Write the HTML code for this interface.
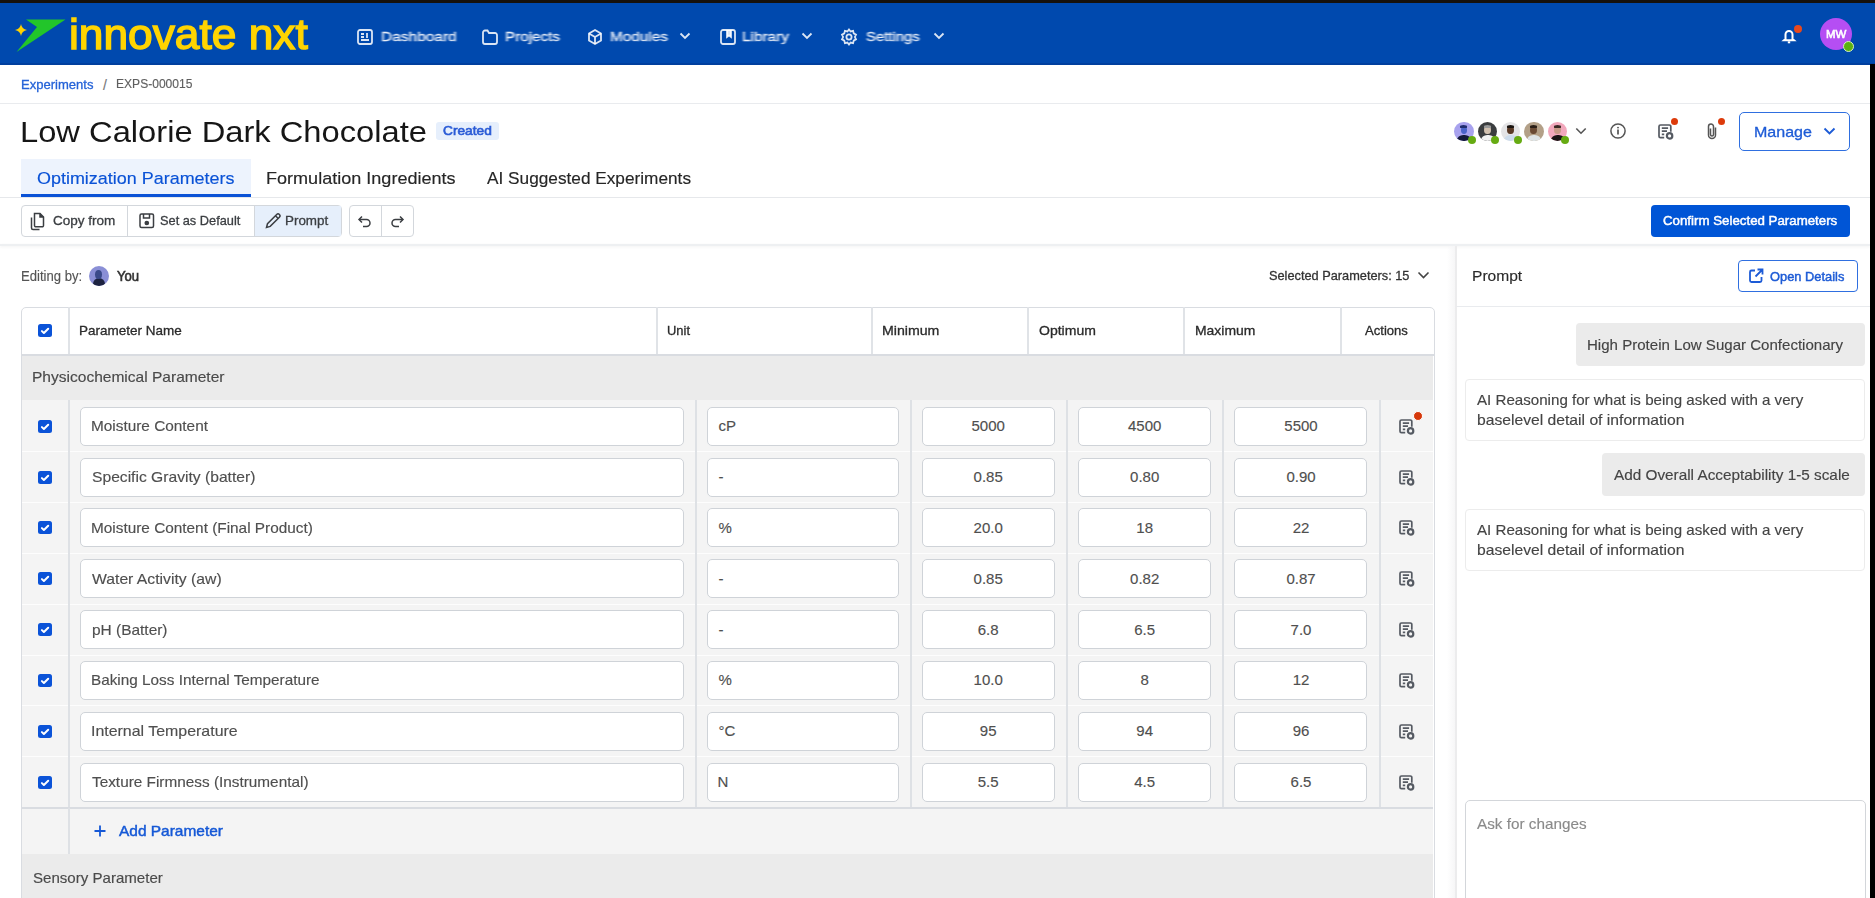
<!DOCTYPE html>
<html><head><meta charset="utf-8"><title>innovate nxt</title>
<style>
html,body{margin:0;padding:0;}
body{width:1875px;height:898px;overflow:hidden;position:relative;background:#fff;font-family:"Liberation Sans", sans-serif;}
.a{position:absolute;}
.t{position:absolute;white-space:nowrap;line-height:1;transform-origin:0 0;}
.t.c .in{display:inline-block;transform-origin:50% 0;}
.t.c{transform:translateX(-50%);}
.cb{width:13.8px;height:13.8px;border-radius:2.5px;background:#0b53d8;}

.inp{background:#fff;border:1px solid #cfd3d8;border-radius:5px;box-sizing:border-box;}
</style></head><body>
<div class="a" style="left:0px;top:0px;width:1875px;height:3px;background:#16110c;"></div>
<div class="a" style="left:0px;top:3px;width:1875px;height:61px;background:#0049ae;"></div>
<div class="a" style="left:0px;top:63px;width:1875px;height:2px;background:#003f9e;"></div>
<div class="a" style="left:1870px;top:64px;width:5px;height:834px;background:#000;"></div>
<svg class="a" style="left:0;top:0" width="80" height="64" viewBox="0 0 80 64">
<path d="M26 19.5 L65.5 19.5 L16.5 52 L37 27 Z" fill="#22c52a"/>
<path d="M21 24 Q21.8 29.2 27 30 Q21.8 30.8 21 36 Q20.2 30.8 15 30 Q20.2 29.2 21 24 Z" fill="#ffd200"/>
</svg>
<div class="a" style="left:355px;top:27px;filter:blur(0.6px)"><svg style="display:block" width="20" height="20" viewBox="0 0 20 20" fill="none" stroke="rgba(255,255,255,0.86)" stroke-width="1.8">
<rect x="3" y="3" width="14" height="14" rx="2"/><path d="M6 7h3M6 10h3M6 13h8M12 6v5"/></svg></div>
<div class="a" style="left:480px;top:27px;filter:blur(0.6px)"><svg style="display:block" width="20" height="20" viewBox="0 0 20 20" fill="none" stroke="rgba(255,255,255,0.86)" stroke-width="1.8">
<path d="M3 6v9a2 2 0 0 0 2 2h10a2 2 0 0 0 2-2V8a2 2 0 0 0-2-2H9L7.5 3.5H5A2 2 0 0 0 3 5.5z"/></svg></div>
<div class="a" style="left:585px;top:27px;filter:blur(0.6px)"><svg style="display:block" width="20" height="20" viewBox="0 0 20 20" fill="none" stroke="rgba(255,255,255,0.86)" stroke-width="1.8">
<path d="M10 3l6 3.5v7L10 17l-6-3.5v-7z"/><path d="M4 6.5l6 3.5 6-3.5M10 10v7"/></svg></div>
<div class="a" style="left:718px;top:27px;filter:blur(0.6px)"><svg style="display:block" width="20" height="20" viewBox="0 0 20 20" fill="none" stroke="rgba(255,255,255,0.86)" stroke-width="1.8">
<rect x="3" y="3" width="14" height="14" rx="2"/><path d="M9 3v7l2-1.5 2 1.5V3" fill="rgba(255,255,255,0.86)"/></svg></div>
<div class="a" style="left:839px;top:27px;filter:blur(0.6px)"><svg style="display:block" width="20" height="20" viewBox="0 0 20 20" fill="none" stroke="rgba(255,255,255,0.86)" stroke-width="1.8">
<circle cx="10" cy="10" r="2.6"/><path d="M10 2.5l1.6 2 2.5-.6.6 2.5 2.3 1.2-1.1 2.4 1.1 2.4-2.3 1.2-.6 2.5-2.5-.6-1.6 2-1.6-2-2.5.6-.6-2.5-2.3-1.2 1.1-2.4-1.1-2.4 2.3-1.2.6-2.5 2.5.6z"/></svg></div>
<svg class="a" style="left:679px;top:31px;filter:blur(0.4px)" width="12" height="10" viewBox="0 0 12 10" fill="none" stroke="rgba(255,255,255,0.86)" stroke-width="1.8"><path d="M1.5 2.5l4.5 4.5 4.5-4.5"/></svg>
<svg class="a" style="left:801px;top:31px;filter:blur(0.4px)" width="12" height="10" viewBox="0 0 12 10" fill="none" stroke="rgba(255,255,255,0.86)" stroke-width="1.8"><path d="M1.5 2.5l4.5 4.5 4.5-4.5"/></svg>
<svg class="a" style="left:933px;top:31px;filter:blur(0.4px)" width="12" height="10" viewBox="0 0 12 10" fill="none" stroke="rgba(255,255,255,0.86)" stroke-width="1.8"><path d="M1.5 2.5l4.5 4.5 4.5-4.5"/></svg>
<svg class="a" style="left:1779px;top:25px;filter:blur(0.4px)" width="20" height="20" viewBox="0 0 20 20" fill="none" stroke="#fff" stroke-width="2">
<path d="M6.5 14V9.5a3.5 3.5 0 0 1 7 0V14l1.5 1.3H5z"/><path d="M8.8 17.3h2.4"/></svg>
<div class="a" style="left:1794px;top:25px;width:8px;height:8px;border-radius:50%;background:#e8491d;"></div>
<div class="a" style="left:1820px;top:18px;width:32px;height:32px;border-radius:50%;background:#b54ef3;"></div>
<div class="a" style="left:1843px;top:41px;width:9px;height:9px;border-radius:50%;background:#5bb20f;border:1px solid #d8f0c0;"></div>
<div class="a" style="left:0px;top:103px;width:1870px;height:1px;background:#e9ebee;"></div>
<div class="a" style="left:436px;top:122px;width:63px;height:18px;background:#e6effc;border-radius:3px;"></div>
<div class="a" style="left:1454.0px;top:121.5px;width:19.8px;height:19.8px;border-radius:50%;background:#a8a2ee;overflow:hidden;"><div style="position:absolute;left:3px;top:13px;width:14px;height:12px;border-radius:45%;background:#141a3a;"></div><div style="position:absolute;left:6.6px;top:4.2px;width:6.6px;height:8.4px;border-radius:50%;background:#4a63c9;"></div><div style="position:absolute;left:6.4px;top:3.2px;width:7px;height:3px;border-radius:50% 50% 20% 20%;background:#1f2c6e;"></div></div>
<div class="a" style="left:1467.6px;top:135.6px;width:8px;height:8px;border-radius:50%;background:#66ab12;"></div>
<div class="a" style="left:1477.5px;top:121.5px;width:19.8px;height:19.8px;border-radius:50%;background:#3b3d3f;overflow:hidden;"><div style="position:absolute;left:3px;top:13px;width:14px;height:12px;border-radius:45%;background:#f2f2f2;"></div><div style="position:absolute;left:6.6px;top:4.2px;width:6.6px;height:8.4px;border-radius:50%;background:#d2c1b0;"></div><div style="position:absolute;left:6.4px;top:3.2px;width:7px;height:3px;border-radius:50% 50% 20% 20%;background:#9a9a9a;"></div></div>
<div class="a" style="left:1491.1px;top:135.6px;width:8px;height:8px;border-radius:50%;background:#66ab12;"></div>
<div class="a" style="left:1500.7px;top:121.5px;width:19.8px;height:19.8px;border-radius:50%;background:#e4e4e6;overflow:hidden;"><div style="position:absolute;left:3px;top:13px;width:14px;height:12px;border-radius:45%;background:#cddcec;"></div><div style="position:absolute;left:6.6px;top:4.2px;width:6.6px;height:8.4px;border-radius:50%;background:#5a3a26;"></div><div style="position:absolute;left:6.4px;top:3.2px;width:7px;height:3px;border-radius:50% 50% 20% 20%;background:#1a1410;"></div></div>
<div class="a" style="left:1514.3px;top:135.6px;width:8px;height:8px;border-radius:50%;background:#66ab12;"></div>
<div class="a" style="left:1523.9px;top:121.5px;width:19.8px;height:19.8px;border-radius:50%;background:#b3a088;overflow:hidden;"><div style="position:absolute;left:3px;top:13px;width:14px;height:12px;border-radius:45%;background:#dfe5e8;"></div><div style="position:absolute;left:6.6px;top:4.2px;width:6.6px;height:8.4px;border-radius:50%;background:#6a4a34;"></div><div style="position:absolute;left:6.4px;top:3.2px;width:7px;height:3px;border-radius:50% 50% 20% 20%;background:#2a1e16;"></div></div>
<div class="a" style="left:1547.5px;top:121.5px;width:19.8px;height:19.8px;border-radius:50%;background:#f2a8bc;overflow:hidden;"><div style="position:absolute;left:3px;top:13px;width:14px;height:12px;border-radius:45%;background:#1a1416;"></div><div style="position:absolute;left:6.6px;top:4.2px;width:6.6px;height:8.4px;border-radius:50%;background:#c89a88;"></div><div style="position:absolute;left:6.4px;top:3.2px;width:7px;height:3px;border-radius:50% 50% 20% 20%;background:#3a2a24;"></div></div>
<div class="a" style="left:1561.1px;top:135.6px;width:8px;height:8px;border-radius:50%;background:#66ab12;"></div>
<svg class="a" style="left:1575px;top:127px" width="12" height="8" viewBox="0 0 12 8" fill="none" stroke="#555" stroke-width="1.6"><path d="M1.3 1.5l4.7 4.7 4.7-4.7"/></svg>
<svg class="a" style="left:1608.1px;top:121.1px" width="20" height="20" viewBox="0 0 20 20" fill="none" stroke="#555" stroke-width="1.5"><circle cx="10" cy="10" r="7.1"/><path d="M10 8.6v4.9" stroke-width="1.7"/><circle cx="10" cy="6.6" r="0.95" fill="#555" stroke="none"/></svg>
<svg class="a" style="left:1658.45px;top:124.45px" width="18" height="18" viewBox="0 0 18 18" fill="none" stroke="#555a62" stroke-width="1.7">
<path d="M6.2 13.7H2.5A1.5 1.5 0 0 1 1 12.2V2.5A1.5 1.5 0 0 1 2.5 1h8.8A1.5 1.5 0 0 1 12.8 2.5V7.8"/>
<path d="M3.8 4.1h6.3M3.8 7.2h5.2M3.8 10.3h2.4"/>
<circle cx="11.6" cy="11.9" r="2.7" stroke-width="2.2"/></svg>
<div class="a" style="left:1670.9px;top:117.8px;width:7.6px;height:7.6px;border-radius:50%;background:#dd3b0b;"></div>
<svg class="a" style="left:1706.75px;top:123.15px" width="11" height="17" viewBox="0 0 11 17" fill="none" stroke="#555" stroke-width="1.5"><path d="M8.5 4.5V12A3.5 3.5 0 0 1 1.5 12V3.5A2.5 2.5 0 0 1 6.5 3.5V11.5A1.5 1.5 0 0 1 3.5 11.5V5.5"/></svg>
<div class="a" style="left:1717.7px;top:117.8px;width:7.6px;height:7.6px;border-radius:50%;background:#dd3b0b;"></div>
<div class="a" style="left:1739px;top:112px;width:111px;height:39px;border:1.5px solid #2f6fe0;border-radius:5px;box-sizing:border-box;background:#fff;"></div>
<svg class="a" style="left:1823px;top:126px" width="13" height="10" viewBox="0 0 13 10" fill="none" stroke="#1d5bd6" stroke-width="1.9"><path d="M1.5 2.5l5 5 5-5"/></svg>
<div class="a" style="left:21px;top:159px;width:230px;height:38px;background:#edf3fd;"></div>
<div class="a" style="left:21px;top:194px;width:230px;height:3px;background:#0a52d6;"></div>
<div class="a" style="left:0px;top:197px;width:1870px;height:1px;background:#e6e8eb;"></div>
<div class="a" style="left:21px;top:205px;width:321px;height:32px;border:1px solid #d3d7dc;border-radius:4px;box-sizing:border-box;background:#fff;"></div>
<div class="a" style="left:254px;top:206px;width:87px;height:30px;background:#e6effb;"></div>
<div class="a" style="left:127px;top:206px;width:1px;height:30px;background:#d3d7dc;"></div>
<div class="a" style="left:254px;top:206px;width:1px;height:30px;background:#d3d7dc;"></div>
<div class="a" style="left:349px;top:205px;width:65px;height:32px;border:1px solid #d3d7dc;border-radius:4px;box-sizing:border-box;background:#fff;"></div>
<div class="a" style="left:381px;top:206px;width:1px;height:30px;background:#d3d7dc;"></div>
<svg class="a" style="left:29px;top:211px" width="20" height="20" viewBox="0 0 20 20" fill="none" stroke="#3b3e42" stroke-width="1.5"><path d="M2.5 6.5v10.5a1.5 1.5 0 0 0 1.5 1.5h6.5"/><path d="M5.5 2.5h5.5l3.5 3.5v8.5a1.3 1.3 0 0 1-1.3 1.3H6.8a1.3 1.3 0 0 1-1.3-1.3z"/><path d="M11 2.5V6h3.5" fill="#3b3e42"/></svg>
<svg class="a" style="left:137px;top:211px" width="20" height="20" viewBox="0 0 20 20" fill="none" stroke="#3b3e42" stroke-width="1.5"><rect x="3" y="3" width="13.5" height="13.5" rx="1.5"/><path d="M6.5 3v4h6V3"/><circle cx="9.8" cy="12" r="1.6" fill="#3b3e42"/></svg>
<svg class="a" style="left:263px;top:211px" width="20" height="20" viewBox="0 0 20 20" fill="none" stroke="#3b3e42" stroke-width="1.5"><path d="M3.5 16.5l1-3.8 9.2-9.2a1.9 1.9 0 0 1 2.7 2.7l-9.2 9.2z"/><path d="M12.5 4.8l2.7 2.7"/></svg>
<svg class="a" style="left:356px;top:213px" width="18" height="16" viewBox="0 0 18 16" fill="none" stroke="#3b3e42" stroke-width="1.5"><path d="M6 3.5L3 6.5 6 9.5"/><path d="M3.5 6.5h7a3.5 3.5 0 0 1 0 7H7"/></svg>
<svg class="a" style="left:388px;top:213px" width="18" height="16" viewBox="0 0 18 16" fill="none" stroke="#3b3e42" stroke-width="1.5"><path d="M12 3.5l3 3-3 3"/><path d="M14.5 6.5h-7a3.5 3.5 0 0 0 0 7H11"/></svg>
<div class="a" style="left:1651px;top:205px;width:199px;height:32px;background:#0055d6;border-radius:4px;"></div>
<div class="a" style="left:0;top:244px;width:1870px;height:2px;background:#eef0f2;box-shadow:0 1px 3px rgba(0,0,0,0.06);"></div>
<div class="a" style="left:88.6px;top:265.6px;width:20px;height:20px;border-radius:50%;background:#8a8fd6;overflow:hidden;"><div style="position:absolute;left:4px;top:12px;width:12px;height:12px;border-radius:50%;background:#1d2340;"></div><div style="position:absolute;left:6.5px;top:4px;width:7px;height:9px;border-radius:50%;background:#3a4a8a;"></div></div>
<svg class="a" style="left:1417px;top:270px" width="13" height="10" viewBox="0 0 13 10" fill="none" stroke="#444" stroke-width="1.6"><path d="M1.5 2.5l5 5 5-5"/></svg>
<div class="a" style="left:20.5px;top:306.5px;width:1414px;height:600px;border:1px solid #d9dce1;border-radius:5px;box-sizing:border-box;"></div>
<div class="a" style="left:68px;top:307px;width:2px;height:47px;background:#e0e3e7;"></div>
<div class="a" style="left:656px;top:307px;width:2px;height:47px;background:#e0e3e7;"></div>
<div class="a" style="left:871px;top:307px;width:2px;height:47px;background:#e0e3e7;"></div>
<div class="a" style="left:1027px;top:307px;width:2px;height:47px;background:#e0e3e7;"></div>
<div class="a" style="left:1183px;top:307px;width:2px;height:47px;background:#e0e3e7;"></div>
<div class="a" style="left:1340px;top:307px;width:2px;height:47px;background:#e0e3e7;"></div>
<div class="a" style="left:21px;top:354px;width:1413px;height:2px;background:#d9dce1;"></div>
<div class="a cb" style="left:38px;top:323.6px;"><svg width="14" height="14" viewBox="0 0 14 14" style="position:absolute;left:0;top:0" fill="none" stroke="#fff" stroke-width="2" stroke-linecap="round" stroke-linejoin="round"><path d="M3.9 7.1L5.9 9 10.2 4.8"/></svg></div>
<div class="a" style="left:22px;top:356px;width:1411px;height:45px;background:#ebebeb;"></div>
<div class="a" style="left:22px;top:400px;width:1411px;height:51px;background:#f4f4f4;"></div>
<div class="a" style="left:68px;top:400px;width:2px;height:51px;background:#dee1e5;"></div>
<div class="a" style="left:695px;top:400px;width:2px;height:51px;background:#dee1e5;"></div>
<div class="a" style="left:910px;top:400px;width:2px;height:51px;background:#dee1e5;"></div>
<div class="a" style="left:1066px;top:400px;width:2px;height:51px;background:#dee1e5;"></div>
<div class="a" style="left:1222px;top:400px;width:2px;height:51px;background:#dee1e5;"></div>
<div class="a" style="left:1379px;top:400px;width:2px;height:51px;background:#dee1e5;"></div>
<div class="a cb" style="left:38px;top:419.6px;"><svg width="14" height="14" viewBox="0 0 14 14" style="position:absolute;left:0;top:0" fill="none" stroke="#fff" stroke-width="2" stroke-linecap="round" stroke-linejoin="round"><path d="M3.9 7.1L5.9 9 10.2 4.8"/></svg></div>
<div class="a inp" style="left:80px;top:407px;width:603.5px;height:39px;"></div>
<div class="a inp" style="left:707px;top:407px;width:191.5px;height:39px;"></div>
<div class="a inp" style="left:922px;top:407px;width:132.5px;height:39px;"></div>
<div class="a inp" style="left:1078.4px;top:407px;width:132.5999999999999px;height:39px;"></div>
<div class="a inp" style="left:1234.4px;top:407px;width:133.0999999999999px;height:39px;"></div>
<svg class="a" style="left:1399.25px;top:419.25px" width="18" height="18" viewBox="0 0 18 18" fill="none" stroke="#555a62" stroke-width="1.7">
<path d="M6.2 13.7H2.5A1.5 1.5 0 0 1 1 12.2V2.5A1.5 1.5 0 0 1 2.5 1h8.8A1.5 1.5 0 0 1 12.8 2.5V7.8"/>
<path d="M3.8 4.1h6.3M3.8 7.2h5.2M3.8 10.3h2.4"/>
<circle cx="11.6" cy="11.9" r="2.7" stroke-width="2.2"/></svg>
<div class="a" style="left:1413px;top:411.4px;width:10px;height:10px;border-radius:50%;background:#d6380a;border:1px solid #fff;box-sizing:border-box;"></div>
<div class="a" style="left:22px;top:451px;width:1411px;height:51px;background:#f4f4f4;"></div>
<div class="a" style="left:22px;top:451px;width:1411px;height:1px;background:#fdfdfd;"></div>
<div class="a" style="left:68px;top:451px;width:2px;height:51px;background:#dee1e5;"></div>
<div class="a" style="left:695px;top:451px;width:2px;height:51px;background:#dee1e5;"></div>
<div class="a" style="left:910px;top:451px;width:2px;height:51px;background:#dee1e5;"></div>
<div class="a" style="left:1066px;top:451px;width:2px;height:51px;background:#dee1e5;"></div>
<div class="a" style="left:1222px;top:451px;width:2px;height:51px;background:#dee1e5;"></div>
<div class="a" style="left:1379px;top:451px;width:2px;height:51px;background:#dee1e5;"></div>
<div class="a cb" style="left:38px;top:470.6px;"><svg width="14" height="14" viewBox="0 0 14 14" style="position:absolute;left:0;top:0" fill="none" stroke="#fff" stroke-width="2" stroke-linecap="round" stroke-linejoin="round"><path d="M3.9 7.1L5.9 9 10.2 4.8"/></svg></div>
<div class="a inp" style="left:80px;top:458px;width:603.5px;height:39px;"></div>
<div class="a inp" style="left:707px;top:458px;width:191.5px;height:39px;"></div>
<div class="a inp" style="left:922px;top:458px;width:132.5px;height:39px;"></div>
<div class="a inp" style="left:1078.4px;top:458px;width:132.5999999999999px;height:39px;"></div>
<div class="a inp" style="left:1234.4px;top:458px;width:133.0999999999999px;height:39px;"></div>
<svg class="a" style="left:1399.25px;top:470.25px" width="18" height="18" viewBox="0 0 18 18" fill="none" stroke="#555a62" stroke-width="1.7">
<path d="M6.2 13.7H2.5A1.5 1.5 0 0 1 1 12.2V2.5A1.5 1.5 0 0 1 2.5 1h8.8A1.5 1.5 0 0 1 12.8 2.5V7.8"/>
<path d="M3.8 4.1h6.3M3.8 7.2h5.2M3.8 10.3h2.4"/>
<circle cx="11.6" cy="11.9" r="2.7" stroke-width="2.2"/></svg>
<div class="a" style="left:22px;top:502px;width:1411px;height:51px;background:#f4f4f4;"></div>
<div class="a" style="left:22px;top:502px;width:1411px;height:1px;background:#fdfdfd;"></div>
<div class="a" style="left:68px;top:502px;width:2px;height:51px;background:#dee1e5;"></div>
<div class="a" style="left:695px;top:502px;width:2px;height:51px;background:#dee1e5;"></div>
<div class="a" style="left:910px;top:502px;width:2px;height:51px;background:#dee1e5;"></div>
<div class="a" style="left:1066px;top:502px;width:2px;height:51px;background:#dee1e5;"></div>
<div class="a" style="left:1222px;top:502px;width:2px;height:51px;background:#dee1e5;"></div>
<div class="a" style="left:1379px;top:502px;width:2px;height:51px;background:#dee1e5;"></div>
<div class="a cb" style="left:38px;top:520.6px;"><svg width="14" height="14" viewBox="0 0 14 14" style="position:absolute;left:0;top:0" fill="none" stroke="#fff" stroke-width="2" stroke-linecap="round" stroke-linejoin="round"><path d="M3.9 7.1L5.9 9 10.2 4.8"/></svg></div>
<div class="a inp" style="left:80px;top:508px;width:603.5px;height:39px;"></div>
<div class="a inp" style="left:707px;top:508px;width:191.5px;height:39px;"></div>
<div class="a inp" style="left:922px;top:508px;width:132.5px;height:39px;"></div>
<div class="a inp" style="left:1078.4px;top:508px;width:132.5999999999999px;height:39px;"></div>
<div class="a inp" style="left:1234.4px;top:508px;width:133.0999999999999px;height:39px;"></div>
<svg class="a" style="left:1399.25px;top:520.25px" width="18" height="18" viewBox="0 0 18 18" fill="none" stroke="#555a62" stroke-width="1.7">
<path d="M6.2 13.7H2.5A1.5 1.5 0 0 1 1 12.2V2.5A1.5 1.5 0 0 1 2.5 1h8.8A1.5 1.5 0 0 1 12.8 2.5V7.8"/>
<path d="M3.8 4.1h6.3M3.8 7.2h5.2M3.8 10.3h2.4"/>
<circle cx="11.6" cy="11.9" r="2.7" stroke-width="2.2"/></svg>
<div class="a" style="left:22px;top:553px;width:1411px;height:51px;background:#f4f4f4;"></div>
<div class="a" style="left:22px;top:553px;width:1411px;height:1px;background:#fdfdfd;"></div>
<div class="a" style="left:68px;top:553px;width:2px;height:51px;background:#dee1e5;"></div>
<div class="a" style="left:695px;top:553px;width:2px;height:51px;background:#dee1e5;"></div>
<div class="a" style="left:910px;top:553px;width:2px;height:51px;background:#dee1e5;"></div>
<div class="a" style="left:1066px;top:553px;width:2px;height:51px;background:#dee1e5;"></div>
<div class="a" style="left:1222px;top:553px;width:2px;height:51px;background:#dee1e5;"></div>
<div class="a" style="left:1379px;top:553px;width:2px;height:51px;background:#dee1e5;"></div>
<div class="a cb" style="left:38px;top:571.6px;"><svg width="14" height="14" viewBox="0 0 14 14" style="position:absolute;left:0;top:0" fill="none" stroke="#fff" stroke-width="2" stroke-linecap="round" stroke-linejoin="round"><path d="M3.9 7.1L5.9 9 10.2 4.8"/></svg></div>
<div class="a inp" style="left:80px;top:559px;width:603.5px;height:39px;"></div>
<div class="a inp" style="left:707px;top:559px;width:191.5px;height:39px;"></div>
<div class="a inp" style="left:922px;top:559px;width:132.5px;height:39px;"></div>
<div class="a inp" style="left:1078.4px;top:559px;width:132.5999999999999px;height:39px;"></div>
<div class="a inp" style="left:1234.4px;top:559px;width:133.0999999999999px;height:39px;"></div>
<svg class="a" style="left:1399.25px;top:571.25px" width="18" height="18" viewBox="0 0 18 18" fill="none" stroke="#555a62" stroke-width="1.7">
<path d="M6.2 13.7H2.5A1.5 1.5 0 0 1 1 12.2V2.5A1.5 1.5 0 0 1 2.5 1h8.8A1.5 1.5 0 0 1 12.8 2.5V7.8"/>
<path d="M3.8 4.1h6.3M3.8 7.2h5.2M3.8 10.3h2.4"/>
<circle cx="11.6" cy="11.9" r="2.7" stroke-width="2.2"/></svg>
<div class="a" style="left:22px;top:604px;width:1411px;height:51px;background:#f4f4f4;"></div>
<div class="a" style="left:22px;top:604px;width:1411px;height:1px;background:#fdfdfd;"></div>
<div class="a" style="left:68px;top:604px;width:2px;height:51px;background:#dee1e5;"></div>
<div class="a" style="left:695px;top:604px;width:2px;height:51px;background:#dee1e5;"></div>
<div class="a" style="left:910px;top:604px;width:2px;height:51px;background:#dee1e5;"></div>
<div class="a" style="left:1066px;top:604px;width:2px;height:51px;background:#dee1e5;"></div>
<div class="a" style="left:1222px;top:604px;width:2px;height:51px;background:#dee1e5;"></div>
<div class="a" style="left:1379px;top:604px;width:2px;height:51px;background:#dee1e5;"></div>
<div class="a cb" style="left:38px;top:622.6px;"><svg width="14" height="14" viewBox="0 0 14 14" style="position:absolute;left:0;top:0" fill="none" stroke="#fff" stroke-width="2" stroke-linecap="round" stroke-linejoin="round"><path d="M3.9 7.1L5.9 9 10.2 4.8"/></svg></div>
<div class="a inp" style="left:80px;top:610px;width:603.5px;height:39px;"></div>
<div class="a inp" style="left:707px;top:610px;width:191.5px;height:39px;"></div>
<div class="a inp" style="left:922px;top:610px;width:132.5px;height:39px;"></div>
<div class="a inp" style="left:1078.4px;top:610px;width:132.5999999999999px;height:39px;"></div>
<div class="a inp" style="left:1234.4px;top:610px;width:133.0999999999999px;height:39px;"></div>
<svg class="a" style="left:1399.25px;top:622.25px" width="18" height="18" viewBox="0 0 18 18" fill="none" stroke="#555a62" stroke-width="1.7">
<path d="M6.2 13.7H2.5A1.5 1.5 0 0 1 1 12.2V2.5A1.5 1.5 0 0 1 2.5 1h8.8A1.5 1.5 0 0 1 12.8 2.5V7.8"/>
<path d="M3.8 4.1h6.3M3.8 7.2h5.2M3.8 10.3h2.4"/>
<circle cx="11.6" cy="11.9" r="2.7" stroke-width="2.2"/></svg>
<div class="a" style="left:22px;top:655px;width:1411px;height:50px;background:#f4f4f4;"></div>
<div class="a" style="left:22px;top:655px;width:1411px;height:1px;background:#fdfdfd;"></div>
<div class="a" style="left:68px;top:655px;width:2px;height:50px;background:#dee1e5;"></div>
<div class="a" style="left:695px;top:655px;width:2px;height:50px;background:#dee1e5;"></div>
<div class="a" style="left:910px;top:655px;width:2px;height:50px;background:#dee1e5;"></div>
<div class="a" style="left:1066px;top:655px;width:2px;height:50px;background:#dee1e5;"></div>
<div class="a" style="left:1222px;top:655px;width:2px;height:50px;background:#dee1e5;"></div>
<div class="a" style="left:1379px;top:655px;width:2px;height:50px;background:#dee1e5;"></div>
<div class="a cb" style="left:38px;top:673.6px;"><svg width="14" height="14" viewBox="0 0 14 14" style="position:absolute;left:0;top:0" fill="none" stroke="#fff" stroke-width="2" stroke-linecap="round" stroke-linejoin="round"><path d="M3.9 7.1L5.9 9 10.2 4.8"/></svg></div>
<div class="a inp" style="left:80px;top:661px;width:603.5px;height:39px;"></div>
<div class="a inp" style="left:707px;top:661px;width:191.5px;height:39px;"></div>
<div class="a inp" style="left:922px;top:661px;width:132.5px;height:39px;"></div>
<div class="a inp" style="left:1078.4px;top:661px;width:132.5999999999999px;height:39px;"></div>
<div class="a inp" style="left:1234.4px;top:661px;width:133.0999999999999px;height:39px;"></div>
<svg class="a" style="left:1399.25px;top:673.25px" width="18" height="18" viewBox="0 0 18 18" fill="none" stroke="#555a62" stroke-width="1.7">
<path d="M6.2 13.7H2.5A1.5 1.5 0 0 1 1 12.2V2.5A1.5 1.5 0 0 1 2.5 1h8.8A1.5 1.5 0 0 1 12.8 2.5V7.8"/>
<path d="M3.8 4.1h6.3M3.8 7.2h5.2M3.8 10.3h2.4"/>
<circle cx="11.6" cy="11.9" r="2.7" stroke-width="2.2"/></svg>
<div class="a" style="left:22px;top:705px;width:1411px;height:51px;background:#f4f4f4;"></div>
<div class="a" style="left:22px;top:705px;width:1411px;height:1px;background:#fdfdfd;"></div>
<div class="a" style="left:68px;top:705px;width:2px;height:51px;background:#dee1e5;"></div>
<div class="a" style="left:695px;top:705px;width:2px;height:51px;background:#dee1e5;"></div>
<div class="a" style="left:910px;top:705px;width:2px;height:51px;background:#dee1e5;"></div>
<div class="a" style="left:1066px;top:705px;width:2px;height:51px;background:#dee1e5;"></div>
<div class="a" style="left:1222px;top:705px;width:2px;height:51px;background:#dee1e5;"></div>
<div class="a" style="left:1379px;top:705px;width:2px;height:51px;background:#dee1e5;"></div>
<div class="a cb" style="left:38px;top:724.6px;"><svg width="14" height="14" viewBox="0 0 14 14" style="position:absolute;left:0;top:0" fill="none" stroke="#fff" stroke-width="2" stroke-linecap="round" stroke-linejoin="round"><path d="M3.9 7.1L5.9 9 10.2 4.8"/></svg></div>
<div class="a inp" style="left:80px;top:712px;width:603.5px;height:39px;"></div>
<div class="a inp" style="left:707px;top:712px;width:191.5px;height:39px;"></div>
<div class="a inp" style="left:922px;top:712px;width:132.5px;height:39px;"></div>
<div class="a inp" style="left:1078.4px;top:712px;width:132.5999999999999px;height:39px;"></div>
<div class="a inp" style="left:1234.4px;top:712px;width:133.0999999999999px;height:39px;"></div>
<svg class="a" style="left:1399.25px;top:724.25px" width="18" height="18" viewBox="0 0 18 18" fill="none" stroke="#555a62" stroke-width="1.7">
<path d="M6.2 13.7H2.5A1.5 1.5 0 0 1 1 12.2V2.5A1.5 1.5 0 0 1 2.5 1h8.8A1.5 1.5 0 0 1 12.8 2.5V7.8"/>
<path d="M3.8 4.1h6.3M3.8 7.2h5.2M3.8 10.3h2.4"/>
<circle cx="11.6" cy="11.9" r="2.7" stroke-width="2.2"/></svg>
<div class="a" style="left:22px;top:756px;width:1411px;height:51px;background:#f4f4f4;"></div>
<div class="a" style="left:22px;top:756px;width:1411px;height:1px;background:#fdfdfd;"></div>
<div class="a" style="left:68px;top:756px;width:2px;height:51px;background:#dee1e5;"></div>
<div class="a" style="left:695px;top:756px;width:2px;height:51px;background:#dee1e5;"></div>
<div class="a" style="left:910px;top:756px;width:2px;height:51px;background:#dee1e5;"></div>
<div class="a" style="left:1066px;top:756px;width:2px;height:51px;background:#dee1e5;"></div>
<div class="a" style="left:1222px;top:756px;width:2px;height:51px;background:#dee1e5;"></div>
<div class="a" style="left:1379px;top:756px;width:2px;height:51px;background:#dee1e5;"></div>
<div class="a cb" style="left:38px;top:775.6px;"><svg width="14" height="14" viewBox="0 0 14 14" style="position:absolute;left:0;top:0" fill="none" stroke="#fff" stroke-width="2" stroke-linecap="round" stroke-linejoin="round"><path d="M3.9 7.1L5.9 9 10.2 4.8"/></svg></div>
<div class="a inp" style="left:80px;top:763px;width:603.5px;height:39px;"></div>
<div class="a inp" style="left:707px;top:763px;width:191.5px;height:39px;"></div>
<div class="a inp" style="left:922px;top:763px;width:132.5px;height:39px;"></div>
<div class="a inp" style="left:1078.4px;top:763px;width:132.5999999999999px;height:39px;"></div>
<div class="a inp" style="left:1234.4px;top:763px;width:133.0999999999999px;height:39px;"></div>
<svg class="a" style="left:1399.25px;top:775.25px" width="18" height="18" viewBox="0 0 18 18" fill="none" stroke="#555a62" stroke-width="1.7">
<path d="M6.2 13.7H2.5A1.5 1.5 0 0 1 1 12.2V2.5A1.5 1.5 0 0 1 2.5 1h8.8A1.5 1.5 0 0 1 12.8 2.5V7.8"/>
<path d="M3.8 4.1h6.3M3.8 7.2h5.2M3.8 10.3h2.4"/>
<circle cx="11.6" cy="11.9" r="2.7" stroke-width="2.2"/></svg>
<div class="a" style="left:22px;top:807px;width:1411px;height:1.5px;background:#d9dce1;"></div>
<div class="a" style="left:22px;top:808.5px;width:1411px;height:45.5px;background:#f4f4f4;"></div>
<div class="a" style="left:68px;top:808px;width:2px;height:46px;background:#dee1e5;"></div>
<svg class="a" style="left:93px;top:824px" width="14" height="14" viewBox="0 0 14 14" fill="none" stroke="#1558d6" stroke-width="1.8"><path d="M7 1.5v11M1.5 7h11"/></svg>
<div class="a" style="left:22px;top:854px;width:1411px;height:44px;background:#ebebeb;"></div>
<div class="a" style="left:1447px;top:246px;width:8px;height:652px;background:linear-gradient(to right, rgba(250,250,250,0), rgba(246,246,247,1));"></div>
<div class="a" style="left:1455px;top:246px;width:2px;height:652px;background:#ececed;"></div>
<div class="a" style="left:1738px;top:260px;width:120px;height:32px;border:1.5px solid #2f6fe0;border-radius:4px;box-sizing:border-box;"></div>
<svg class="a" style="left:1747px;top:267px" width="18" height="18" viewBox="0 0 18 18" fill="none" stroke="#1d5bd6" stroke-width="1.8"><path d="M8 3.5H4.5a1.5 1.5 0 0 0-1.5 1.5v8.5a1.5 1.5 0 0 0 1.5 1.5H13a1.5 1.5 0 0 0 1.5-1.5V10"/><path d="M10.5 2.5h5v5M15.5 2.5L8.5 9.5"/></svg>
<div class="a" style="left:1456px;top:306px;width:414px;height:1px;background:#e9ebee;"></div>
<div class="a" style="left:1576.4px;top:323px;width:288.5999999999999px;height:43px;background:#ebebeb;border-radius:4px;"></div>
<div class="a" style="left:1465px;top:379px;width:400px;height:62px;border:1px solid #ececec;border-radius:4px;box-sizing:border-box;"></div>
<div class="a" style="left:1602px;top:453px;width:263.4000000000001px;height:43px;background:#ebebeb;border-radius:4px;"></div>
<div class="a" style="left:1465px;top:509px;width:400.4000000000001px;height:62px;border:1px solid #ececec;border-radius:4px;box-sizing:border-box;"></div>
<div class="a" style="left:1465px;top:800px;width:401px;height:110px;border:1px solid #d3d6da;border-radius:5px;box-sizing:border-box;background:#fff;"></div>
<span id="logo" class="t" style="left:68.89px;top:14.45px;font-size:42px;color:#ffd400;font-weight:400;transform:scaleX(1.0542);-webkit-text-stroke:1.4px #ffd400;filter:blur(0.35px);">innovate nxt</span>
<span id="nav1" class="t" style="left:380.85px;top:30.07px;font-size:13.5px;color:rgba(255,255,255,0.86);font-weight:400;transform:scaleX(1.1467);-webkit-text-stroke:0.3px rgba(255,255,255,0.86);filter:blur(0.75px);">Dashboard</span>
<span id="nav2" class="t" style="left:504.88px;top:30.07px;font-size:13.5px;color:rgba(255,255,255,0.86);font-weight:400;transform:scaleX(1.1246);-webkit-text-stroke:0.3px rgba(255,255,255,0.86);filter:blur(0.75px);">Projects</span>
<span id="nav3" class="t" style="left:609.87px;top:30.07px;font-size:13.5px;color:rgba(255,255,255,0.86);font-weight:400;transform:scaleX(1.1337);-webkit-text-stroke:0.3px rgba(255,255,255,0.86);filter:blur(0.75px);">Modules</span>
<span id="nav4" class="t" style="left:741.86px;top:30.07px;font-size:13.5px;color:rgba(255,255,255,0.86);font-weight:400;transform:scaleX(1.1354);-webkit-text-stroke:0.3px rgba(255,255,255,0.86);filter:blur(0.75px);">Library</span>
<span id="nav5" class="t" style="left:866.00px;top:30.07px;font-size:13.5px;color:rgba(255,255,255,0.86);font-weight:400;transform:scaleX(1.1014);-webkit-text-stroke:0.3px rgba(255,255,255,0.86);filter:blur(0.75px);">Settings</span>
<span id="mw" class="t" style="left:1826.20px;top:28.69px;font-size:11px;color:#fff;font-weight:400;transform:scaleX(1.0415);-webkit-text-stroke:0.6px #fff;filter:blur(0.4px);">MW</span>
<span id="bc1" class="t" style="left:20.60px;top:77.50px;font-size:13px;color:#2563d8;font-weight:400;transform:scaleX(1.0035);-webkit-text-stroke:0.3px #2563d8;">Experiments</span>
<span id="bc2" class="t" style="left:103.00px;top:77.65px;font-size:14px;color:#777;font-weight:400;transform:scaleX(1.0000);-webkit-text-stroke:0.15px #777;">/</span>
<span id="bc3" class="t" style="left:115.54px;top:77.92px;font-size:12.5px;color:#5f5f5f;font-weight:400;transform:scaleX(0.9646);-webkit-text-stroke:0.15px #5f5f5f;">EXPS-000015</span>
<span id="title" class="t" style="left:19.82px;top:116.61px;font-size:30px;color:#161616;font-weight:400;transform:scaleX(1.0895);">Low Calorie Dark Chocolate</span>
<span id="badge" class="t" style="left:443.00px;top:124.84px;font-size:12px;color:#2a5bd6;font-weight:400;transform:scaleX(1.1424);-webkit-text-stroke:0.6px #2a5bd6;">Created</span>
<span id="manage" class="t" style="left:1753.93px;top:124.30px;font-size:15px;color:#1d5bd6;font-weight:400;transform:scaleX(1.0688);-webkit-text-stroke:0.3px #1d5bd6;">Manage</span>
<span id="tab1" class="t" style="left:37.00px;top:169.81px;font-size:17px;color:#0a52d6;font-weight:400;transform:scaleX(1.0559);-webkit-text-stroke:0.15px #0a52d6;">Optimization Parameters</span>
<span id="tab2" class="t" style="left:265.54px;top:169.81px;font-size:17px;color:#262626;font-weight:400;transform:scaleX(1.0616);-webkit-text-stroke:0.15px #262626;">Formulation Ingredients</span>
<span id="tab3" class="t" style="left:487.00px;top:169.81px;font-size:17px;color:#262626;font-weight:400;transform:scaleX(1.0136);-webkit-text-stroke:0.15px #262626;">AI Suggested Experiments</span>
<span id="tb1" class="t" style="left:53.00px;top:214.30px;font-size:13px;color:#3b3e42;font-weight:400;transform:scaleX(1.0401);-webkit-text-stroke:0.3px #3b3e42;">Copy from</span>
<span id="tb2" class="t" style="left:160.30px;top:214.30px;font-size:13px;color:#3b3e42;font-weight:400;transform:scaleX(0.9836);-webkit-text-stroke:0.3px #3b3e42;">Set as Default</span>
<span id="tb3" class="t" style="left:285.37px;top:214.30px;font-size:13px;color:#3b3e42;font-weight:400;transform:scaleX(1.0318);-webkit-text-stroke:0.3px #3b3e42;">Prompt</span>
<span id="confirm" class="t" style="left:1663.00px;top:214.82px;font-size:12.5px;color:#fff;font-weight:400;transform:scaleX(1.0629);-webkit-text-stroke:0.45px #fff;">Confirm Selected Parameters</span>
<span id="edit" class="t" style="left:20.66px;top:268.75px;font-size:14px;color:#555;font-weight:400;transform:scaleX(0.9357);-webkit-text-stroke:0.15px #555;">Editing by:</span>
<span id="you" class="t" style="left:116.60px;top:268.75px;font-size:14px;color:#333;font-weight:400;transform:scaleX(0.9370);-webkit-text-stroke:0.6px #333;">You</span>
<span id="selp" class="t" style="left:1268.60px;top:269.00px;font-size:13px;color:#333;font-weight:400;transform:scaleX(0.9815);-webkit-text-stroke:0.3px #333;">Selected Parameters: 15</span>
<span id="h1" class="t" style="left:78.96px;top:324.20px;font-size:13px;color:#2b2b2b;font-weight:400;transform:scaleX(1.0374);-webkit-text-stroke:0.3px #2b2b2b;">Parameter Name</span>
<span id="h2" class="t" style="left:667.00px;top:324.20px;font-size:13px;color:#2b2b2b;font-weight:400;transform:scaleX(0.9953);-webkit-text-stroke:0.3px #2b2b2b;">Unit</span>
<span id="h3" class="t" style="left:881.91px;top:324.20px;font-size:13px;color:#2b2b2b;font-weight:400;transform:scaleX(1.0885);-webkit-text-stroke:0.3px #2b2b2b;">Minimum</span>
<span id="h4" class="t" style="left:1039.00px;top:324.20px;font-size:13px;color:#2b2b2b;font-weight:400;transform:scaleX(1.0790);-webkit-text-stroke:0.3px #2b2b2b;">Optimum</span>
<span id="h5" class="t" style="left:1194.53px;top:324.20px;font-size:13px;color:#2b2b2b;font-weight:400;transform:scaleX(1.0714);-webkit-text-stroke:0.3px #2b2b2b;">Maximum</span>
<span id="h6" class="t" style="left:1365.00px;top:324.20px;font-size:13px;color:#2b2b2b;font-weight:400;transform:scaleX(1.0062);-webkit-text-stroke:0.3px #2b2b2b;">Actions</span>
<span id="g1" class="t" style="left:31.93px;top:370.13px;font-size:14.5px;color:#4a4a4a;font-weight:400;transform:scaleX(1.0711);-webkit-text-stroke:0.15px #4a4a4a;">Physicochemical Parameter</span>
<span id="r0n" class="t" style="left:90.58px;top:418.30px;font-size:15px;color:#4f4f4f;font-weight:400;transform:scaleX(1.0241);-webkit-text-stroke:0.15px #4f4f4f;">Moisture Content</span>
<span id="r0u" class="t" style="left:718.60px;top:418.30px;font-size:15px;color:#4f4f4f;font-weight:400;transform:scaleX(1.0000);-webkit-text-stroke:0.15px #4f4f4f;">cP</span>
<span id="r0a" class="t c" style="left:988.20px;top:418.30px;font-size:15px;color:#4f4f4f;font-weight:400;-webkit-text-stroke:0.15px #4f4f4f;"><span class="in" style="transform:scaleX(1.0000)">5000</span></span>
<span id="r0b" class="t c" style="left:1144.70px;top:418.30px;font-size:15px;color:#4f4f4f;font-weight:400;-webkit-text-stroke:0.15px #4f4f4f;"><span class="in" style="transform:scaleX(1.0000)">4500</span></span>
<span id="r0c" class="t c" style="left:1301.00px;top:418.30px;font-size:15px;color:#4f4f4f;font-weight:400;-webkit-text-stroke:0.15px #4f4f4f;"><span class="in" style="transform:scaleX(1.0000)">5500</span></span>
<span id="r1n" class="t" style="left:91.60px;top:469.13px;font-size:15px;color:#4f4f4f;font-weight:400;transform:scaleX(1.0427);-webkit-text-stroke:0.15px #4f4f4f;">Specific Gravity (batter)</span>
<span id="r1u" class="t" style="left:718.60px;top:469.13px;font-size:15px;color:#4f4f4f;font-weight:400;transform:scaleX(1.0000);-webkit-text-stroke:0.15px #4f4f4f;">-</span>
<span id="r1a" class="t c" style="left:988.20px;top:469.13px;font-size:15px;color:#4f4f4f;font-weight:400;-webkit-text-stroke:0.15px #4f4f4f;"><span class="in" style="transform:scaleX(1.0000)">0.85</span></span>
<span id="r1b" class="t c" style="left:1144.70px;top:469.13px;font-size:15px;color:#4f4f4f;font-weight:400;-webkit-text-stroke:0.15px #4f4f4f;"><span class="in" style="transform:scaleX(1.0000)">0.80</span></span>
<span id="r1c" class="t c" style="left:1301.00px;top:469.13px;font-size:15px;color:#4f4f4f;font-weight:400;-webkit-text-stroke:0.15px #4f4f4f;"><span class="in" style="transform:scaleX(1.0000)">0.90</span></span>
<span id="r2n" class="t" style="left:90.58px;top:519.96px;font-size:15px;color:#4f4f4f;font-weight:400;transform:scaleX(1.0234);-webkit-text-stroke:0.15px #4f4f4f;">Moisture Content (Final Product)</span>
<span id="r2u" class="t" style="left:718.60px;top:519.96px;font-size:15px;color:#4f4f4f;font-weight:400;transform:scaleX(1.0000);-webkit-text-stroke:0.15px #4f4f4f;">%</span>
<span id="r2a" class="t c" style="left:988.20px;top:519.96px;font-size:15px;color:#4f4f4f;font-weight:400;-webkit-text-stroke:0.15px #4f4f4f;"><span class="in" style="transform:scaleX(1.0000)">20.0</span></span>
<span id="r2b" class="t c" style="left:1144.70px;top:519.96px;font-size:15px;color:#4f4f4f;font-weight:400;-webkit-text-stroke:0.15px #4f4f4f;"><span class="in" style="transform:scaleX(1.0000)">18</span></span>
<span id="r2c" class="t c" style="left:1301.00px;top:519.96px;font-size:15px;color:#4f4f4f;font-weight:400;-webkit-text-stroke:0.15px #4f4f4f;"><span class="in" style="transform:scaleX(1.0000)">22</span></span>
<span id="r3n" class="t" style="left:91.60px;top:570.79px;font-size:15px;color:#4f4f4f;font-weight:400;transform:scaleX(1.0485);-webkit-text-stroke:0.15px #4f4f4f;">Water Activity (aw)</span>
<span id="r3u" class="t" style="left:718.60px;top:570.79px;font-size:15px;color:#4f4f4f;font-weight:400;transform:scaleX(1.0000);-webkit-text-stroke:0.15px #4f4f4f;">-</span>
<span id="r3a" class="t c" style="left:988.20px;top:570.79px;font-size:15px;color:#4f4f4f;font-weight:400;-webkit-text-stroke:0.15px #4f4f4f;"><span class="in" style="transform:scaleX(1.0000)">0.85</span></span>
<span id="r3b" class="t c" style="left:1144.70px;top:570.79px;font-size:15px;color:#4f4f4f;font-weight:400;-webkit-text-stroke:0.15px #4f4f4f;"><span class="in" style="transform:scaleX(1.0000)">0.82</span></span>
<span id="r3c" class="t c" style="left:1301.00px;top:570.79px;font-size:15px;color:#4f4f4f;font-weight:400;-webkit-text-stroke:0.15px #4f4f4f;"><span class="in" style="transform:scaleX(1.0000)">0.87</span></span>
<span id="r4n" class="t" style="left:91.60px;top:621.62px;font-size:15px;color:#4f4f4f;font-weight:400;transform:scaleX(1.0292);-webkit-text-stroke:0.15px #4f4f4f;">pH (Batter)</span>
<span id="r4u" class="t" style="left:718.60px;top:621.62px;font-size:15px;color:#4f4f4f;font-weight:400;transform:scaleX(1.0000);-webkit-text-stroke:0.15px #4f4f4f;">-</span>
<span id="r4a" class="t c" style="left:988.20px;top:621.62px;font-size:15px;color:#4f4f4f;font-weight:400;-webkit-text-stroke:0.15px #4f4f4f;"><span class="in" style="transform:scaleX(1.0000)">6.8</span></span>
<span id="r4b" class="t c" style="left:1144.70px;top:621.62px;font-size:15px;color:#4f4f4f;font-weight:400;-webkit-text-stroke:0.15px #4f4f4f;"><span class="in" style="transform:scaleX(1.0000)">6.5</span></span>
<span id="r4c" class="t c" style="left:1301.00px;top:621.62px;font-size:15px;color:#4f4f4f;font-weight:400;-webkit-text-stroke:0.15px #4f4f4f;"><span class="in" style="transform:scaleX(1.0000)">7.0</span></span>
<span id="r5n" class="t" style="left:90.58px;top:672.45px;font-size:15px;color:#4f4f4f;font-weight:400;transform:scaleX(1.0204);-webkit-text-stroke:0.15px #4f4f4f;">Baking Loss Internal Temperature</span>
<span id="r5u" class="t" style="left:718.60px;top:672.45px;font-size:15px;color:#4f4f4f;font-weight:400;transform:scaleX(1.0000);-webkit-text-stroke:0.15px #4f4f4f;">%</span>
<span id="r5a" class="t c" style="left:988.20px;top:672.45px;font-size:15px;color:#4f4f4f;font-weight:400;-webkit-text-stroke:0.15px #4f4f4f;"><span class="in" style="transform:scaleX(1.0000)">10.0</span></span>
<span id="r5b" class="t c" style="left:1144.70px;top:672.45px;font-size:15px;color:#4f4f4f;font-weight:400;-webkit-text-stroke:0.15px #4f4f4f;"><span class="in" style="transform:scaleX(1.0000)">8</span></span>
<span id="r5c" class="t c" style="left:1301.00px;top:672.45px;font-size:15px;color:#4f4f4f;font-weight:400;-webkit-text-stroke:0.15px #4f4f4f;"><span class="in" style="transform:scaleX(1.0000)">12</span></span>
<span id="r6n" class="t" style="left:90.54px;top:723.28px;font-size:15px;color:#4f4f4f;font-weight:400;transform:scaleX(1.0616);-webkit-text-stroke:0.15px #4f4f4f;">Internal Temperature</span>
<span id="r6u" class="t" style="left:718.60px;top:723.28px;font-size:15px;color:#4f4f4f;font-weight:400;transform:scaleX(1.0000);-webkit-text-stroke:0.15px #4f4f4f;">°C</span>
<span id="r6a" class="t c" style="left:988.20px;top:723.28px;font-size:15px;color:#4f4f4f;font-weight:400;-webkit-text-stroke:0.15px #4f4f4f;"><span class="in" style="transform:scaleX(1.0000)">95</span></span>
<span id="r6b" class="t c" style="left:1144.70px;top:723.28px;font-size:15px;color:#4f4f4f;font-weight:400;-webkit-text-stroke:0.15px #4f4f4f;"><span class="in" style="transform:scaleX(1.0000)">94</span></span>
<span id="r6c" class="t c" style="left:1301.00px;top:723.28px;font-size:15px;color:#4f4f4f;font-weight:400;-webkit-text-stroke:0.15px #4f4f4f;"><span class="in" style="transform:scaleX(1.0000)">96</span></span>
<span id="r7n" class="t" style="left:91.60px;top:774.11px;font-size:15px;color:#4f4f4f;font-weight:400;transform:scaleX(1.0225);-webkit-text-stroke:0.15px #4f4f4f;">Texture Firmness (Instrumental)</span>
<span id="r7u" class="t" style="left:717.60px;top:774.11px;font-size:15px;color:#4f4f4f;font-weight:400;transform:scaleX(1.0000);-webkit-text-stroke:0.15px #4f4f4f;">N</span>
<span id="r7a" class="t c" style="left:988.20px;top:774.11px;font-size:15px;color:#4f4f4f;font-weight:400;-webkit-text-stroke:0.15px #4f4f4f;"><span class="in" style="transform:scaleX(1.0000)">5.5</span></span>
<span id="r7b" class="t c" style="left:1144.70px;top:774.11px;font-size:15px;color:#4f4f4f;font-weight:400;-webkit-text-stroke:0.15px #4f4f4f;"><span class="in" style="transform:scaleX(1.0000)">4.5</span></span>
<span id="r7c" class="t c" style="left:1301.00px;top:774.11px;font-size:15px;color:#4f4f4f;font-weight:400;-webkit-text-stroke:0.15px #4f4f4f;"><span class="in" style="transform:scaleX(1.0000)">6.5</span></span>
<span id="addp" class="t" style="left:118.60px;top:822.90px;font-size:15px;color:#1558d6;font-weight:400;transform:scaleX(1.0308);-webkit-text-stroke:0.45px #1558d6;">Add Parameter</span>
<span id="g2" class="t" style="left:33.00px;top:870.73px;font-size:14.5px;color:#4a4a4a;font-weight:400;transform:scaleX(1.0393);-webkit-text-stroke:0.15px #4a4a4a;">Sensory Parameter</span>
<span id="pp" class="t" style="left:1472.36px;top:268.30px;font-size:15px;color:#2a2a2a;font-weight:400;transform:scaleX(1.0378);-webkit-text-stroke:0.15px #2a2a2a;">Prompt</span>
<span id="od" class="t" style="left:1769.60px;top:269.50px;font-size:13px;color:#1d5bd6;font-weight:400;transform:scaleX(0.9888);-webkit-text-stroke:0.45px #1d5bd6;">Open Details</span>
<span id="bub1" class="t" style="left:1587.00px;top:336.70px;font-size:15px;color:#444;font-weight:400;transform:scaleX(1.0038);-webkit-text-stroke:0.15px #444;">High Protein Low Sugar Confectionary</span>
<span id="ai1a" class="t" style="left:1477.00px;top:392.10px;font-size:15px;color:#444;font-weight:400;transform:scaleX(1.0083);-webkit-text-stroke:0.15px #444;">AI Reasoning for what is being asked with a very</span>
<span id="ai1b" class="t" style="left:1477.00px;top:411.60px;font-size:15px;color:#444;font-weight:400;transform:scaleX(1.0449);-webkit-text-stroke:0.15px #444;">baselevel detail of information</span>
<span id="bub2" class="t" style="left:1613.70px;top:466.70px;font-size:15px;color:#444;font-weight:400;transform:scaleX(1.0210);-webkit-text-stroke:0.15px #444;">Add Overall Acceptability 1-5 scale</span>
<span id="ai2a" class="t" style="left:1477.00px;top:522.10px;font-size:15px;color:#444;font-weight:400;transform:scaleX(1.0083);-webkit-text-stroke:0.15px #444;">AI Reasoning for what is being asked with a very</span>
<span id="ai2b" class="t" style="left:1477.00px;top:541.60px;font-size:15px;color:#444;font-weight:400;transform:scaleX(1.0449);-webkit-text-stroke:0.15px #444;">baselevel detail of information</span>
<span id="ask" class="t" style="left:1477.00px;top:816.30px;font-size:15px;color:#8a8a8a;font-weight:400;transform:scaleX(1.0182);-webkit-text-stroke:0.15px #8a8a8a;">Ask for changes</span>
</body></html>
